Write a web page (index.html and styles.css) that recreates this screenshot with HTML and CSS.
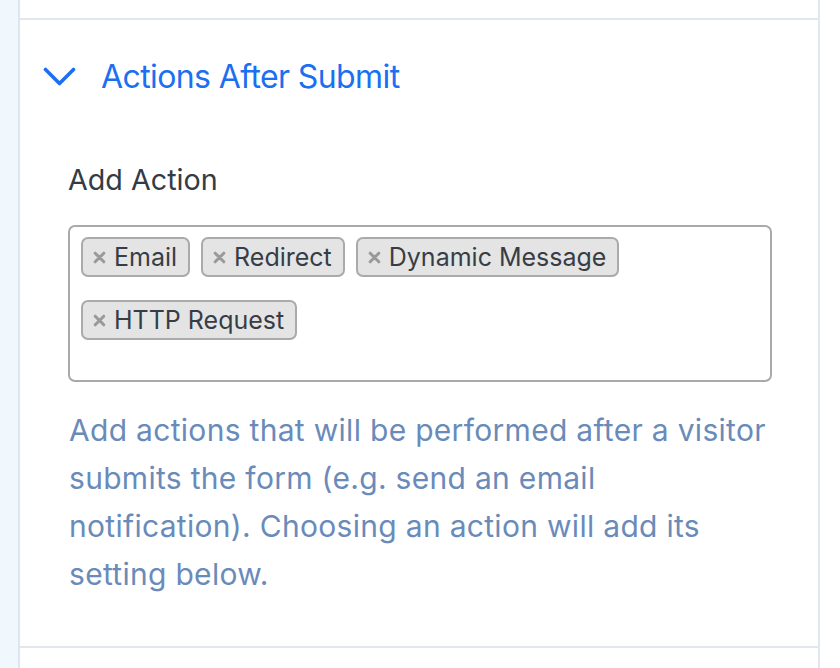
FILE: index.html
```html
<!DOCTYPE html>
<html lang="en">
<head>
<meta charset="utf-8">
<title>Actions After Submit</title>
<link rel="stylesheet" href="styles.css">
</head>
<body>
<div class="page">
  <div class="sidebar"></div>
  <div class="panel">
    <div class="panel-top"></div>
    <section class="section">
      <div class="section-header">
        <svg class="chevron" width="33" height="19" viewBox="0 0 33 19" aria-hidden="true">
          <polyline points="2.5,2.5 16.5,16.5 30.5,2.5" fill="none" stroke="#1b6ff0" stroke-width="3.6" stroke-linecap="round" stroke-linejoin="round"/>
        </svg>
        <h2 class="section-title">Actions After Submit</h2>
      </div>
      <div class="section-body">
        <div class="field-label">Add Action</div>
        <div class="multiselect">
          <span class="tag"><svg class="tag-x" width="13" height="13" viewBox="0 0 13 13" aria-hidden="true"><path d="M2.2 2.2L10.8 10.8M10.8 2.2L2.2 10.8" stroke="#999" stroke-width="3" stroke-linecap="round"/></svg>Email</span>
          <span class="tag"><svg class="tag-x" width="13" height="13" viewBox="0 0 13 13" aria-hidden="true"><path d="M2.2 2.2L10.8 10.8M10.8 2.2L2.2 10.8" stroke="#999" stroke-width="3" stroke-linecap="round"/></svg>Redirect</span>
          <span class="tag"><svg class="tag-x" width="13" height="13" viewBox="0 0 13 13" aria-hidden="true"><path d="M2.2 2.2L10.8 10.8M10.8 2.2L2.2 10.8" stroke="#999" stroke-width="3" stroke-linecap="round"/></svg>Dynamic Message</span>
          <span class="tag"><svg class="tag-x" width="13" height="13" viewBox="0 0 13 13" aria-hidden="true"><path d="M2.2 2.2L10.8 10.8M10.8 2.2L2.2 10.8" stroke="#999" stroke-width="3" stroke-linecap="round"/></svg>HTTP Request</span>
        </div>
        <p class="help">Add actions that will be performed after a visitor submits the form (e.g. send an email notification). Choosing an action will add its setting below.</p>
      </div>
    </section>
    <div class="panel-bottom"></div>
  </div>
</div>
</body>
</html>
```

FILE: styles.css
```css
html, body {
  margin: 0;
  padding: 0;
  background: #ffffff;
}

body {
  font-family: Inter, "Liberation Sans", Arial, sans-serif;
  width: 840px;
  height: 668px;
  overflow: hidden;
}

.page {
  display: flex;
  height: 668px;
}

.sidebar {
  width: 18px;
  flex: 0 0 18px;
  background: #f0f8fe;
  border-right: 2px solid #dce5f0;
}

.panel {
  width: 798px;
  flex: 0 0 798px;
  border-right: 2px solid #e2e7ed;
  display: flex;
  flex-direction: column;
}

.panel-top {
  height: 18px;
  border-bottom: 2px solid #e2e7ed;
}

.section {
  border-bottom: 2px solid #e2e7ed;
  height: 628px;
  box-sizing: border-box;
}

.section-header {
  display: flex;
  align-items: center;
  padding: 36px 0 0 23px;
  height: 40px;
}

.chevron {
  display: block;
  flex: 0 0 auto;
}

.section-title {
  margin: 2px 0 0 25px;
  font-size: 32px;
  letter-spacing: -0.6px;
  line-height: 40px;
  font-weight: 400;
  color: #1b6ff0;
}

.section-body {
  padding: 66px 0 0 48px;
}

.field-label {
  font-size: 28.7px;
  line-height: 36px;
  color: #343b45;
}

.multiselect {
  margin-top: 27px;
  width: 704px;
  height: 157px;
  box-sizing: border-box;
  border: 2px solid #a9a9a9;
  border-radius: 7px;
  padding: 10px 11px;
  display: flex;
  flex-wrap: wrap;
  align-content: flex-start;
  gap: 23px 11px;
}

.tag {
  display: inline-flex;
  align-items: center;
  height: 40px;
  box-sizing: border-box;
  padding: 0 11px 0 10px;
  background: #e4e4e4;
  border: 2px solid #aaaaaa;
  border-radius: 7px;
  font-size: 25px;
  color: #373d46;
  white-space: nowrap;
}

.tag-x {
  display: block;
  margin-right: 8px;
}

.help {
  margin: 24px 0 0 1px;
  width: 704px;
  font-size: 30px;
  letter-spacing: 0.3px;
  line-height: 48px;
  color: #6a8bb9;
}

.panel-bottom {
  flex: 1 1 auto;
}
```
